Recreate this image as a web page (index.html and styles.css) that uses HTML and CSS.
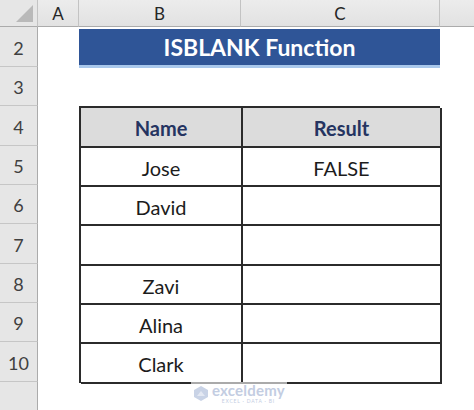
FILE: index.html
```html
<!DOCTYPE html>
<html>
<head>
<meta charset="utf-8">
<link rel="stylesheet" href="styles.css">
</head>
<body>
<div class="sheet">
  <div class="corner">
    <svg width="38" height="27" viewBox="0 0 38 27"><polygon points="33,5 33,22 16,22" fill="#b9b9b9"/></svg>
  </div>
  <div class="colhead">A</div>
  <div class="colhead">B</div>
  <div class="colhead">C</div>
  <div class="colhead last"></div>

  <div class="rowhead r2">2</div>
  <div class="rowhead r3">3</div>
  <div class="rowhead r4">4</div>
  <div class="rowhead r5">5</div>
  <div class="rowhead r6">6</div>
  <div class="rowhead r7">7</div>
  <div class="rowhead r8">8</div>
  <div class="rowhead r9">9</div>
  <div class="rowhead r10">10</div>
  <div class="rowhead r11 empty"></div>

  <div class="title">ISBLANK Function</div>

  <div class="table">
    <div class="cell th">Name</div>
    <div class="cell th">Result</div>
    <div class="cell">Jose</div>
    <div class="cell">FALSE</div>
    <div class="cell">David</div>
    <div class="cell"></div>
    <div class="cell"></div>
    <div class="cell"></div>
    <div class="cell">Zavi</div>
    <div class="cell"></div>
    <div class="cell">Alina</div>
    <div class="cell"></div>
    <div class="cell">Clark</div>
    <div class="cell"></div>
  </div>

  <div class="watermark">
    <svg class="wm-logo" width="16" height="17" viewBox="0 0 16 17"><path d="M8 1 L15 5 L15 12 L8 16 L1 12 L1 5 Z" fill="#c9d3e6"/><path d="M4 11 L8 6 L12 11 Z" fill="#e4e9f3"/></svg>
    <div class="wm-text">
      <div class="wm-name">exceldemy</div>
      <div class="wm-sub">EXCEL · DATA · BI</div>
    </div>
  </div>
</div>
</body>
</html>
```

FILE: styles.css
```css
* { box-sizing: border-box; }
html, body { margin: 0; padding: 0; background: #ffffff; }
body { width: 474px; height: 410px; overflow: hidden; font-family: Lato, "Open Sans", sans-serif; }

.sheet {
  position: relative;
  display: grid;
  grid-template-columns: 38px 41px 162px 199px 1fr;
  grid-template-rows: 27px 40px 39px 40px 39px 39px 40px 39px 39px 40px 1fr;
  width: 474px;
  height: 410px;
}

.corner {
  grid-column: 1; grid-row: 1;
  background: #e6e6e6;
  border-right: 1px solid #c3c3c3;
  border-bottom: 1px solid #ababab;
}
.corner svg { display: block; }

.colhead {
  grid-row: 1;
  background: linear-gradient(#ececec, #e2e2e2);
  border-right: 1px solid #c3c3c3;
  border-bottom: 1px solid #ababab;
  display: flex; align-items: center; justify-content: center;
  font-size: 17px; color: #262626;
  padding-top: 1px;
}
.colhead.last { border-right: none; }

.rowhead {
  grid-column: 1;
  background: #e6e6e6;
  border-right: 1px solid #ababab;
  border-bottom: 1px solid #c6c6c6;
  display: flex; align-items: flex-end; justify-content: center;
  padding-bottom: 7px;
  font-size: 18px; color: #404040;
}
.r2 { grid-row: 2; } .r3 { grid-row: 3; } .r4 { grid-row: 4; }
.r5 { grid-row: 5; } .r6 { grid-row: 6; } .r7 { grid-row: 7; }
.r8 { grid-row: 8; } .r9 { grid-row: 9; } .r10 { grid-row: 10; }
.r11 { grid-row: 11; border-bottom: none; }

.title {
  grid-column: 3 / 5; grid-row: 2;
  align-self: start;
  margin-top: 2px;
  height: 39px;
  background: #2f5597;
  border-bottom: 3px solid #a9c8ec;
  color: #ffffff;
  font-weight: 700;
  font-size: 23px;
  display: flex; align-items: center; justify-content: center;
  padding-bottom: 1px;
}

.table {
  grid-column: 3 / 5; grid-row: 4 / 11;
  display: grid;
  grid-template-columns: 162px 199px;
  grid-template-rows: 40px 39px 39px 40px 39px 39px 40px;
  border-top: 2px solid #2b2b2b;
  border-left: 2px solid #2b2b2b;
  margin-bottom: -1px;
}
.cell {
  border-right: 2px solid #2b2b2b;
  border-bottom: 2px solid #2b2b2b;
  display: flex; align-items: center; justify-content: center;
  font-size: 20px; color: #1c1c1c;
  padding-top: 2px;
}
.cell.th {
  background: #dcdcdc;
  font-weight: 700;
  color: #253461;
}

.watermark {
  position: absolute;
  left: 191px; top: 382px;
  display: flex; align-items: center; gap: 3px;
  padding: 1px 2px;
  background: rgba(255,255,255,0.6);
}
.wm-logo { display: block; }
.wm-text { display: flex; flex-direction: column; align-items: center; line-height: 1; }
.wm-name { font-size: 15px; font-weight: 700; color: #c3cde2; letter-spacing: 0.2px; }
.wm-sub { font-size: 5px; color: #c3cde2; letter-spacing: 0.8px; margin-top: 1px; }
```
